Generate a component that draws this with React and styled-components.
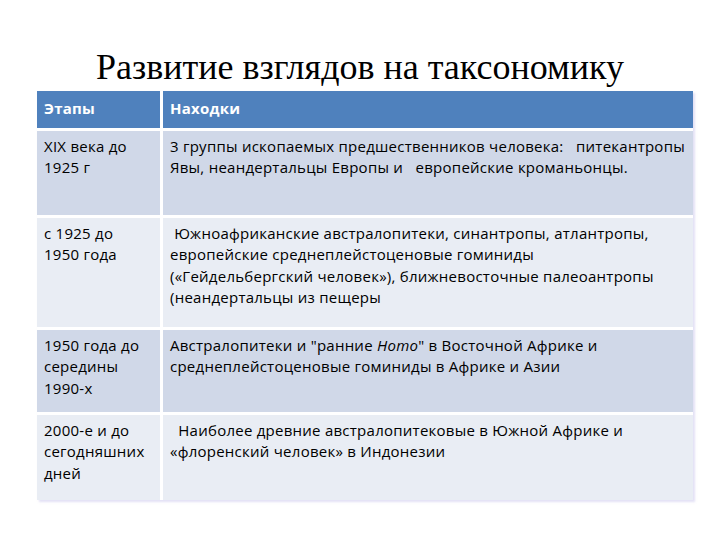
import React from "react";
import styled, { createGlobalStyle } from "styled-components";

const Global = createGlobalStyle`
  html, body { margin: 0; padding: 0; background: #ffffff; }
  body { width: 720px; height: 540px; overflow: hidden; }
`;

const Page = styled.div`
  width: 720px;
  height: 540px;
  display: flex;
  flex-direction: column;
  align-items: center;
  background: #ffffff;
`;

const Title = styled.h1`
  margin: 43px 0 0 0;
  height: 48px;
  font-family: "Liberation Serif", "Times New Roman", serif;
  font-weight: normal;
  font-size: 36px;
  line-height: 48px;
  color: #000000;
  text-align: center;
  white-space: nowrap;
`;

const Table = styled.div`
  margin-left: 10px;
  width: 656px;
  display: grid;
  grid-template-columns: 123px 530px;
  grid-template-rows: 37px 84px 109px 82px 85px;
  column-gap: 3px;
  row-gap: 3px;
  background: #ffffff;
  box-shadow: 2px 2px 2px rgba(200, 195, 235, 0.5);
`;

const Cell = styled.div`
  background: ${(p) => (p.$kind === "head" ? "#4f81bd" : p.$kind === "odd" ? "#d0d8e8" : "#e9edf4")};
  color: ${(p) => (p.$kind === "head" ? "#ffffff" : "#000000")};
  font-family: "Open Sans", "Liberation Sans", sans-serif;
  font-size: 15px;
  font-weight: ${(p) => (p.$kind === "head" ? 700 : 400)};
  line-height: 21.3px;
  padding: ${(p) => (p.$kind === "head" ? "7px 7px" : "5px 7px")};
  letter-spacing: 0.25px;
`;

const Line = styled.span`
  display: block;
  white-space: pre;
`;

const rows = [
  {
    kind: "odd",
    stage: ["XIX века до", "1925 г"],
    finds: [
      "3 группы ископаемых предшественников человека:   питекантропы",
      "Явы, неандертальцы Европы и   европейские кроманьонцы.",
    ],
  },
  {
    kind: "even",
    stage: ["с 1925 до", "1950 года"],
    finds: [
      " Южноафриканские австралопитеки, синантропы, атлантропы,",
      "европейские среднеплейстоценовые гоминиды",
      "(«Гейдельбергский человек»), ближневосточные палеоантропы",
      "(неандертальцы из пещеры",
    ],
  },
  {
    kind: "odd",
    stage: ["1950 года до", "середины", "1990-х"],
    finds: [
      <>Австралопитеки и "ранние <i>Homo</i>" в Восточной Африке и</>,
      "среднеплейстоценовые гоминиды в Африке и Азии",
    ],
  },
  {
    kind: "even",
    stage: ["2000-е и до", "сегодняшних", "дней"],
    finds: [
      "  Наиболее древние австралопитековые в Южной Африке и",
      "«флоренский человек» в Индонезии",
    ],
  },
];

export default function App() {
  return (
    <Page>
      <Global />
      <Title>Развитие взглядов на таксономику</Title>
      <Table>
        <Cell $kind="head">Этапы</Cell>
        <Cell $kind="head">Находки</Cell>
        {rows.map((r, i) => (
          <React.Fragment key={i}>
            <Cell $kind={r.kind}>
              {r.stage.map((l, j) => (
                <Line key={j}>{l}</Line>
              ))}
            </Cell>
            <Cell $kind={r.kind}>
              {r.finds.map((l, j) => (
                <Line key={j}>{l}</Line>
              ))}
            </Cell>
          </React.Fragment>
        ))}
      </Table>
    </Page>
  );
}
